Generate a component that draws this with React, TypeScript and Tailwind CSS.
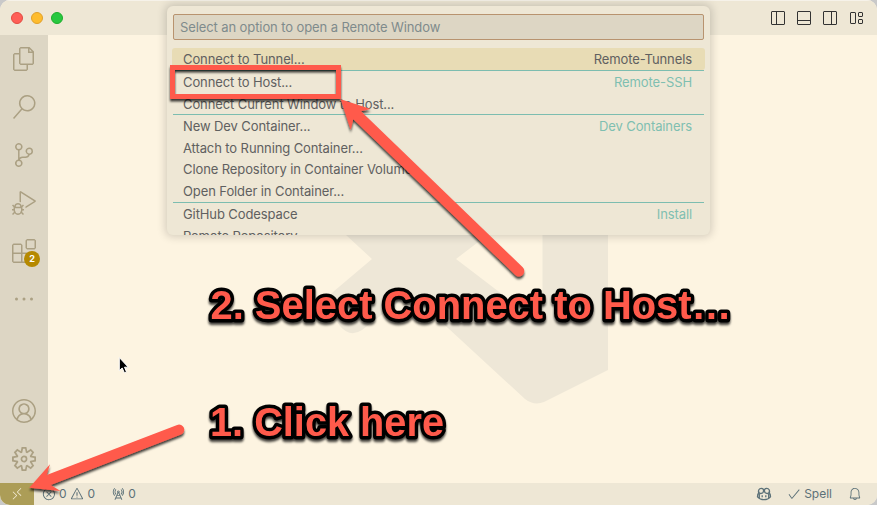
import React from "react";
import {
  VscFiles, VscSearch, VscSourceControl, VscDebugAlt, VscExtensions, VscEllipsis,
  VscAccount, VscSettingsGear, VscRemote, VscError, VscWarning, VscRadioTower,
  VscBell, VscCheck, VscLayoutSidebarLeftOff, VscLayoutPanelOff,
  VscLayoutSidebarRightOff, VscLayout,
} from "react-icons/vsc";

const rows = [
  { label: "Connect to Tunnel...", tag: "Remote-Tunnels", cls: "h-[22px]", active: true },
  { label: "Connect to Host...", tag: "Remote-SSH", cls: "h-[23px] border-t" },
  { label: "Connect Current Window to Host...", cls: "h-[21px]" },
  { label: "New Dev Container...", tag: "Dev Containers", cls: "h-[23px] border-t" },
  { label: "Attach to Running Container...", cls: "h-[21px]" },
  { label: "Clone Repository in Container Volume...", cls: "h-[22px]" },
  { label: "Open Folder in Container...", cls: "h-[22px]" },
  { label: "GitHub Codespace", tag: "Install", cls: "h-[23px] border-t" },
  { label: "Remote Repository", cls: "h-[21px]" },
];

function QuickPick() {
  return (
    <div className="absolute left-[167px] top-[6px] flex h-[229px] w-[543px] flex-col overflow-hidden rounded-md bg-[#eee7d5] pt-2 text-[13px] text-[#606060] shadow-[0_0_8px_2px_rgba(0,0,0,0.16)]">
      <div className="mx-[6px] flex h-[26px] shrink-0 items-center rounded-[2px] border border-[#b8936f] bg-[#ddd6c4] px-[6px] pt-[2px] tracking-[-0.1px] text-[#7f8b8c]">
        Select an option to open a Remote Window
      </div>
      <div className="mt-2 px-[5px] tracking-[-0.1px]">
        {rows.map((r) =>
          <div key={r.label} className={`flex items-center justify-between border-[#7cbdb0] pt-[2px] ${r.cls} ${r.active ? "rounded-[3px] bg-[#e8dcb5] pl-[11px] pr-[13px]" : "mx-px pl-[10px] pr-[12px]"}`}>
            <span>{r.label}</span>
            <span className={r.active ? "" : "text-[#7fbfb1]"}>{r.tag}</span>
          </div>
        )}
      </div>
    </div>
  );
}

function Watermark() {
  return (
    <svg className="absolute left-0 top-0" width="877" height="505" fill="#eee7d7">
      <path d="M346 235 L372 259 L333 292 Q326 299 330 313 L340 326 Q350 338 362 330 L410 293 L525 399 Q534 406 544 402 L608 370 V200 H542.500 V325 L456 259 L542.500 193 V150 H346 Z" />
    </svg>
  );
}

function Annotations() {
  return (
    <svg className="pointer-events-none absolute left-0 top-0" width="877" height="505">
      <defs>
        <filter id="drop" x="-10%" y="-20%" width="120%" height="150%">
          <feDropShadow dx="0" dy="2.500" stdDeviation="1.300" floodColor="#000" floodOpacity="0.75" />
        </filter>
      </defs>
      <g filter="url(#drop)">
        <rect x="172.500" y="67.500" width="166" height="29" fill="none" stroke="#ff5a4b" strokeWidth="5" />
      </g>
      <g filter="url(#drop)" fill="#ff5a4b">
        <path d="M340.700 99.300 L370.700 109 L361 111.200 L522.700 267.300 A5.300 5.300 0 0 1 515.300 274.900 L353.300 119.300 L350.700 130 Z" />
        <path d="M29.300 487.700 L50 464.300 L46.700 475 L177.200 424.900 A5 5 0 0 1 181 434.500 L50.700 485 L60.500 491 Z" />
      </g>
      <g filter="url(#drop)" fill="#ff5a4b" stroke="#000" strokeWidth="7" strokeLinejoin="round" style={{ paintOrder: "stroke" }} fontFamily="Liberation Sans, Arial, sans-serif" fontWeight="700" fontSize="41">
        <text x="210.500" y="319" textLength="521" lengthAdjust="spacingAndGlyphs">2. Select Connect to Host…</text>
        <text x="210" y="436" textLength="234" lengthAdjust="spacingAndGlyphs">1. Click here</text>
      </g>
    </svg>
  );
}

function Copilot() {
  return (
    <svg width="16" height="16" viewBox="0 0 16 16" fill="none" stroke="currentColor" strokeWidth="1.300">
      <path d="M2.700 7.200 C2 4.500 3 2.400 5.300 2.400 C7.200 2.400 7.700 3.500 7.500 5.300 C7.300 7 6.300 7.500 4.800 7.500 C3.600 7.500 2.700 7 2.900 5.300 M13.300 7.200 C14 4.500 13 2.400 10.700 2.400 C8.800 2.400 8.300 3.500 8.500 5.300 C8.700 7 9.700 7.500 11.200 7.500 C12.400 7.500 13.300 7 13.100 5.300 M7.400 4.500 H8.600" />
      <path d="M2.700 7 C1.500 7.800 1.500 8.500 1.500 10.800 C3 12.600 5.300 13.700 8 13.700 C10.700 13.700 13 12.600 14.500 10.800 C14.500 8.500 14.500 7.800 13.300 7 M3.300 7.500 V12 M12.700 7.500 V12 M6.200 9.200 V11.300 M9.800 9.200 V11.300" />
    </svg>
  );
}

export default function App() {
  return (
    <div className="h-[505px] w-[877px] overflow-hidden bg-[#c9c9c9] font-['Inter','Liberation_Sans',sans-serif]">
      <div className="relative flex h-full w-full flex-col overflow-hidden rounded-[10px] bg-[#fdf4e1]">
        <header className="flex h-[35px] shrink-0 items-center justify-between border-t border-[#f6f2e9] bg-[#eee7d5] pl-[11px] pr-[13px]">
          <div className="flex gap-2">
            <span className="size-3 rounded-full border border-[#e24b41] bg-[#ff5f57]" />
            <span className="size-3 rounded-full border border-[#e1a02a] bg-[#febc2e]" />
            <span className="size-3 rounded-full border border-[#1dad2b] bg-[#28c840]" />
          </div>
          <div className="flex gap-[10px] text-[#333]">
            <VscLayoutSidebarLeftOff size={16} />
            <VscLayoutPanelOff size={16} />
            <VscLayoutSidebarRightOff size={16} />
            <VscLayout size={16} />
          </div>
        </header>
        <div className="flex min-h-0 flex-1">
          <nav className="flex w-12 flex-col justify-between bg-[#ddd6c4] text-[#aba083]">
            <div className="flex flex-col">
              <div className="grid h-12 place-items-center"><VscFiles size={24} /></div>
              <div className="grid h-12 place-items-center"><VscSearch size={24} /></div>
              <div className="grid h-12 place-items-center"><VscSourceControl size={24} /></div>
              <div className="grid h-12 place-items-center"><VscDebugAlt size={24} /></div>
              <div className="relative grid h-12 place-items-center">
                <VscExtensions size={24} />
                <span className="absolute left-6 top-6 grid size-4 place-items-center rounded-full bg-[#b58900] text-[9px] font-bold text-white">2</span>
              </div>
              <div className="grid h-12 place-items-center"><VscEllipsis size={24} /></div>
            </div>
            <div className="flex flex-col">
              <div className="grid h-12 place-items-center"><VscAccount size={24} /></div>
              <div className="grid h-12 place-items-center"><VscSettingsGear size={24} /></div>
            </div>
          </nav>
          <main className="flex-1" />
        </div>
        <footer className="flex h-[22px] shrink-0 items-center bg-[#eee7d5] text-[12px] text-[#5c7178]">
          <div className="grid h-full w-[34px] place-items-center bg-[#ac9d57] text-[#f3ecd6]"><VscRemote size={14} /></div>
          <div className="ml-2 flex items-center">
            <VscError size={14} /><span className="ml-[3px]">0</span>
            <VscWarning size={14} className="ml-[3px]" /><span className="ml-[4px]">0</span>
            <VscRadioTower size={14} className="ml-[16px]" /><span className="ml-[3px]">0</span>
          </div>
          <div className="ml-auto flex items-center pr-[15px]">
            <Copilot />
            <VscCheck size={14} className="ml-[15px]" />
            <span className="ml-[3px]">Spell</span>
            <VscBell size={14} className="ml-[16px]" />
          </div>
        </footer>
        <Watermark />
        <QuickPick />
        <Annotations />
        <svg className="absolute left-[117px] top-[356px]" width="14" height="20" viewBox="0 0 14 20">
          <path d="M2.300 1.500 V14.700 L5.200 12 L7.400 16.800 L9.500 15.900 L7.500 11.200 H11.300 Z" fill="#000" stroke="#fff" strokeWidth="1" />
        </svg>
      </div>
    </div>
  );
}
